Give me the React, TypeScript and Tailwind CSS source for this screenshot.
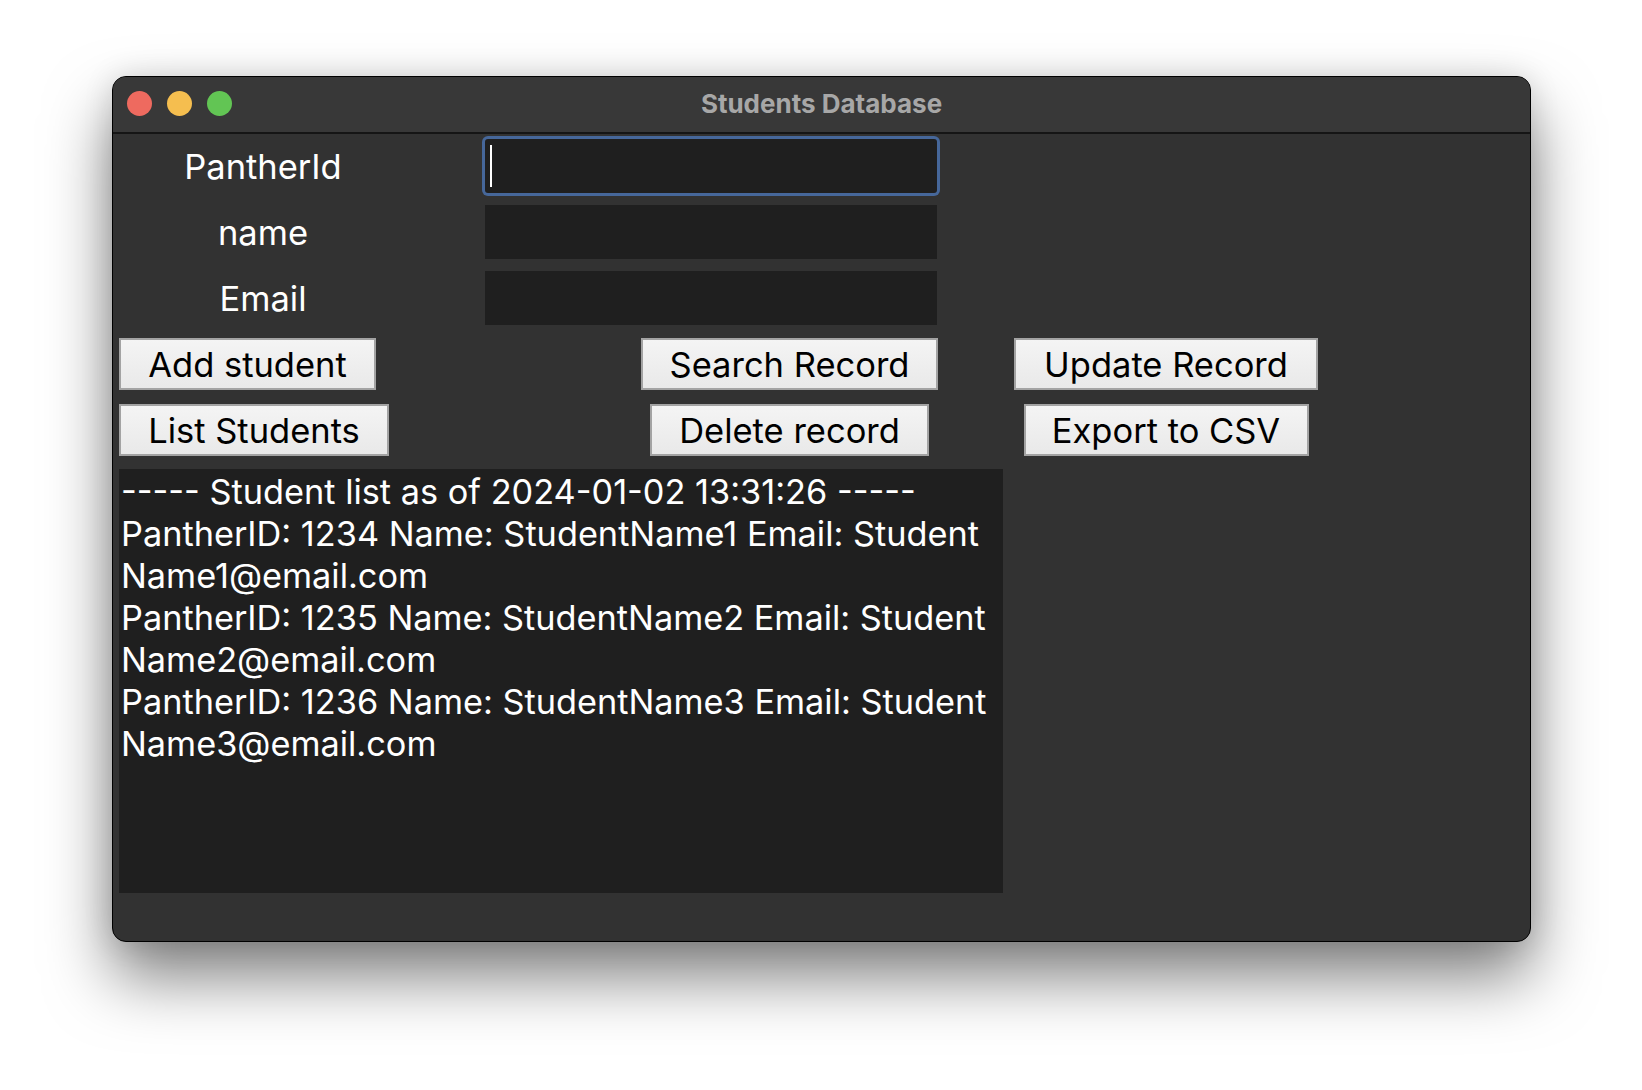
import React from "react";

const font = { fontFamily: "Inter, 'Liberation Sans', sans-serif" };

function TkButton({ label, width }: { label: string; width: string }) {
  return (
    <button
      className={`${width} h-[52px] border-2 border-[#a3a3a3] bg-gradient-to-b from-[#f4f4f4] to-[#e9e9e9] text-[34.5px] leading-none text-black pt-[2px]`}
    >
      {label}
    </button>
  );
}

const records = [
  "----- Student list as of 2024-01-02 13:31:26 -----",
  "PantherID: 1234 Name: StudentName1 Email: Student",
  "Name1@email.com",
  "PantherID: 1235 Name: StudentName2 Email: Student",
  "Name2@email.com",
  "PantherID: 1236 Name: StudentName3 Email: Student",
  "Name3@email.com",
];

export default function App() {
  const fields = ["PantherId", "name", "Email"];

  return (
    <div className="min-h-screen bg-white pt-[76px] pl-[112px]" style={font}>
      <div className="w-[1419px] h-[866px] rounded-[14px] border border-black bg-[#323232] overflow-hidden shadow-[0_35px_65px_rgba(0,0,0,0.5),0_0_30px_rgba(0,0,0,0.12)] flex flex-col">
        {/* title bar */}
        <div className="relative h-[57px] shrink-0 bg-[#383838] border-b-2 border-[#151515] flex items-center">
          <div className="flex items-center gap-[15px] pl-[14px] -mt-[2px]">
            <div className="w-[25px] h-[25px] rounded-full bg-[#ee6a5f]" />
            <div className="w-[25px] h-[25px] rounded-full bg-[#f5be4f]" />
            <div className="w-[25px] h-[25px] rounded-full bg-[#62c554]" />
          </div>
          <div className="absolute inset-0 -top-[3px] flex items-center justify-center text-[26px] font-bold text-[#a7a7a7]">
            Students Database
          </div>
        </div>

        {/* body */}
        <div className="flex flex-col pl-[6px] pt-[5px]">
          <div className="flex flex-col gap-[12px]">
            {fields.map((f, i) => (
              <div key={f} className="flex h-[54px] items-start">
                <div className="w-[288px] h-[54px] pt-[3px] text-center text-[34.5px] leading-[50px] text-white">
                  {f}
                </div>
                <div
                  className={`ml-[78px] w-[452px] h-[54px] bg-[#1f1f1f] ${
                    i === 0 ? "ring-[3px] ring-[#46679a] rounded-[3px]" : ""
                  } flex items-center pl-[5px]`}
                >
                  {i === 0 && <div className="w-[2px] h-[42px] bg-white" />}
                </div>
              </div>
            ))}
          </div>

          <div className="mt-[13px] grid grid-cols-[494px_353px_400px] gap-y-[14px]">
            <div className="justify-self-start">
              <TkButton label="Add student" width="w-[257px]" />
            </div>
            <div className="justify-self-center">
              <TkButton label="Search Record" width="w-[297px]" />
            </div>
            <div className="justify-self-center">
              <TkButton label="Update Record" width="w-[304px]" />
            </div>
            <div className="justify-self-start">
              <TkButton label="List Students" width="w-[270px]" />
            </div>
            <div className="justify-self-center">
              <TkButton label="Delete record" width="w-[279px]" />
            </div>
            <div className="justify-self-center">
              <TkButton label="Export to CSV" width="w-[285px]" />
            </div>
          </div>

          <div className="mt-[13px] w-[884px] h-[424px] bg-[#1f1f1f] px-[2px] pt-[2px] overflow-hidden">
            {records.map((line, i) => (
              <div key={i} className="whitespace-nowrap text-[34.3px] leading-[42px] text-white">
                {line}
              </div>
            ))}
          </div>
        </div>
      </div>
    </div>
  );
}
